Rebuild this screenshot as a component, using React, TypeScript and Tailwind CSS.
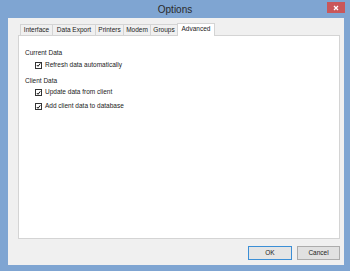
import React from "react";

const tabs = [
  { label: "Interface", w: "w-[33px]" },
  { label: "Data Export", w: "w-[44px]" },
  { label: "Printers", w: "w-[29px]" },
  { label: "Modem", w: "w-[28px]" },
  { label: "Groups", w: "w-[28px]" },
];

function Check({ label }: { label: string }) {
  return (
    <div className="flex items-center gap-[3px]">
      <span className="flex h-[7px] w-[7px] items-center justify-center border border-[#333] bg-white">
        <svg width="6" height="6" viewBox="0 0 6 6">
          <path d="M1 3 L2.4 4.6 L5.2 1" fill="none" stroke="#111" strokeWidth="1.2" />
        </svg>
      </span>
      <span>{label}</span>
    </div>
  );
}

export default function App() {
  return (
    <div
      className="relative flex h-[271px] w-[350px] flex-col bg-[#7fa5d2] text-[#222]"
      style={{ fontFamily: "Tahoma, 'Liberation Sans', Arial, sans-serif" }}
    >
      {/* title bar */}
      <div className="relative flex h-[18px] items-center justify-center">
        <span className="text-[10px] text-[#2a2a2a]">Options</span>
        <div className="absolute right-[5px] top-[2px] flex h-[11px] w-[18px] items-center justify-center bg-[#c9575a]">
          <svg width="6" height="6" viewBox="0 0 6 6">
            <path d="M1 1 L5 5 M5 1 L1 5" stroke="#fff" strokeWidth="1.3" />
          </svg>
        </div>
      </div>

      {/* client area */}
      <div className="mb-[6px] ml-[8px] mr-[6px] flex flex-1 flex-col bg-[#f0f0f0] pl-[10px] pr-[4px] pt-[4px]">
        <div className="ml-[2px] flex h-[13px] items-end text-[6.5px] leading-none">
          {tabs.map((t) => (
            <div
              key={t.label}
              className={`-mr-px flex h-[11px] items-center justify-center border border-b-0 border-[#d4d4d4] bg-[#f0f0f0] ${t.w}`}
            >
              {t.label}
            </div>
          ))}
          <div className="relative z-10 -mb-px flex h-[13px] w-[38px] items-center justify-center border border-b-0 border-[#d4d4d4] bg-white pb-[2px]">
            Advanced
          </div>
        </div>

        <div className="flex h-[204px] flex-col border border-[#d4d4d4] bg-white px-[6px] pt-[14px] text-[6.5px] leading-none">
          <div>Current Data</div>
          <div className="ml-[10px] mt-[5px]">
            <Check label="Refresh data automatically" />
          </div>
          <div className="mt-[9px]">Client Data</div>
          <div className="ml-[10px] mt-[5px] flex flex-col gap-[7px]">
            <Check label="Update data from client" />
            <Check label="Add client data to database" />
          </div>
        </div>

        <div className="mt-[7px] flex justify-end gap-[5px] text-[6.5px]">
          <button className="flex h-[14px] w-[44px] items-center justify-center border border-[#3c8fd6] bg-[#e5e5e5]">
            OK
          </button>
          <button className="flex h-[14px] w-[43px] items-center justify-center border border-[#acacac] bg-[#e1e1e1]">
            Cancel
          </button>
        </div>
      </div>
    </div>
  );
}
